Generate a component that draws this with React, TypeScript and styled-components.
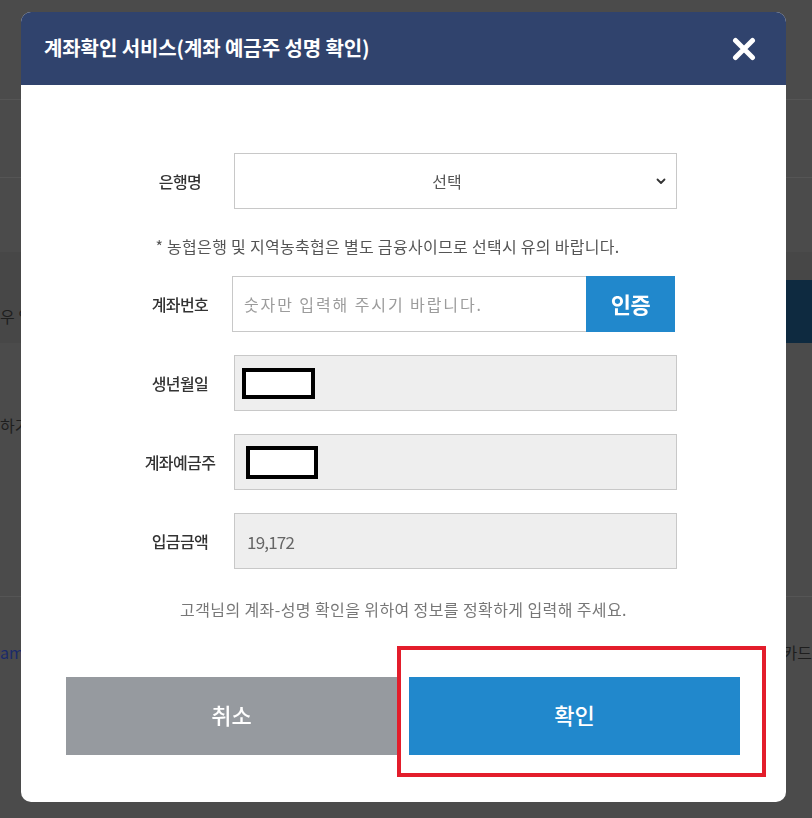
import React from "react";
import styled, { createGlobalStyle } from "styled-components";

const GlobalStyle = createGlobalStyle`
  html, body {
    margin: 0;
    padding: 0;
    background: #4b4b4b;
  }
  body {
    font-family: "Noto Sans CJK KR", "Noto Sans", sans-serif;
    width: 812px;
    height: 818px;
    overflow: hidden;
  }
  * { box-sizing: border-box; }
`;

/* ---------- dimmed background page ---------- */
const Page = styled.div`
  width: 812px;
  height: 818px;
  display: flex;
  flex-direction: column;
  background: #4b4b4b;
  color: #1c1c1c;
  font-size: 16px;
`;

const PageBand = styled.div<{ $h: number; $line?: boolean; $bg?: string; $align?: string }>`
  height: ${(p) => p.$h}px;
  flex: none;
  background: ${(p) => p.$bg || "transparent"};
  border-bottom: ${(p) => (p.$line ? "1px solid #555555" : "none")};
  display: flex;
  align-items: ${(p) => p.$align || "center"};
  justify-content: space-between;
`;

const PageText = styled.span<{ $color?: string; $shift?: number }>`
  color: ${(p) => p.$color || "#1e1e1e"};
  font-size: 16px;
  white-space: nowrap;
  line-height: 1;
  margin-top: ${(p) => p.$shift ?? 0}px;
`;

const NavyBlock = styled.div`
  width: 30px;
  height: 63px;
  align-self: flex-end;
  background: #0e2a40;
`;

/* ---------- modal ---------- */
const Overlay = styled.div`
  position: fixed;
  inset: 0;
  padding: 12px 26px 16px 21px;
  display: flex;
  align-items: flex-start;
`;

const Modal = styled.div`
  width: 765px;
  height: 790px;
  background: #ffffff;
  border-radius: 10px;
  display: flex;
  flex-direction: column;
`;

const Header = styled.div`
  height: 73px;
  flex: none;
  background: #30436d;
  border-radius: 10px 10px 0 0;
  display: flex;
  align-items: center;
  justify-content: space-between;
  padding: 0 29px 0 23px;
`;

const Title = styled.h1`
  margin: 0;
  color: #ffffff;
  font-size: 20px;
  font-weight: 700;
  letter-spacing: -0.1px;
  line-height: 1;
  padding-bottom: 2px;
`;

const CloseButton = styled.button`
  width: 26px;
  height: 26px;
  padding: 0;
  border: 0;
  background: transparent;
  display: flex;
  align-items: center;
  justify-content: center;
  cursor: pointer;
`;

const Body = styled.div`
  flex: 1;
  display: flex;
  flex-direction: column;
  padding: 68px 0 0;
`;

const Form = styled.div`
  width: 547px;
  margin: 0 auto;
  display: flex;
  flex-direction: column;
`;

const Row = styled.div<{ $gapAfter?: number }>`
  display: grid;
  grid-template-columns: 100px 443px;
  column-gap: 4px;
  align-items: center;
  margin-bottom: ${(p) => p.$gapAfter ?? 23}px;
`;

const Label = styled.label`
  text-align: center;
  color: #333333;
  font-size: 16px;
  font-weight: 500;
  letter-spacing: -0.6px;
`;

const SelectBox = styled.div`
  height: 56px;
  border: 1px solid #c8c8c8;
  background: #ffffff;
  display: flex;
  align-items: center;
  padding: 0 10px 0 0;
`;

const SelectText = styled.span`
  flex: 1;
  text-align: center;
  color: #555555;
  font-size: 16px;
  padding-left: 3px;
`;

const InputGroup = styled.div`
  display: flex;
  height: 56px;
  margin-left: -2px;
  margin-right: 2px;
`;

const TextInput = styled.input`
  flex: 1;
  min-width: 0;
  height: 56px;
  border: 1px solid #c8c8c8;
  border-right: 0;
  padding: 0 11px;
  font-family: "Noto Sans CJK KR", sans-serif;
  font-size: 16px;
  letter-spacing: 1.9px;
  color: #333;
  outline: none;
  &::placeholder {
    color: #9c9c9c;
  }
`;

const AuthButton = styled.button`
  width: 89px;
  height: 56px;
  border: 0;
  background: #2188cc;
  color: #ffffff;
  font-family: "Noto Sans CJK KR", sans-serif;
  font-size: 22px;
  font-weight: 700;
  letter-spacing: -0.5px;
  padding: 0 0 2px;
  cursor: pointer;
`;

const ReadonlyBox = styled.div<{ $pad?: number }>`
  height: 56px;
  border: 1px solid #c8c8c8;
  background: #eeeeee;
  display: flex;
  align-items: center;
  padding-left: ${(p) => p.$pad ?? 12}px;
  color: #666666;
  font-size: 17px;
  letter-spacing: -0.8px;
`;

const Redaction = styled.div<{ $w: number; $h: number }>`
  width: ${(p) => p.$w}px;
  height: ${(p) => p.$h}px;
  border: 4px solid #000000;
  background: #ffffff;
`;

const Note = styled.p<{
  $top: number;
  $bottom: number;
  $color: string;
  $spacing: number;
  $offset?: number;
}>`
  margin: 0;
  padding: ${(p) => p.$top}px 0 ${(p) => p.$bottom}px;
  line-height: 20px;
  font-size: 16px;
  color: ${(p) => p.$color};
  text-align: center;
  letter-spacing: ${(p) => p.$spacing}px;
  white-space: nowrap;
  transform: translateX(${(p) => p.$offset ?? 0}px);
`;

const ButtonRow = styled.div`
  display: flex;
  gap: 12px;
  padding: 0 46px 0 45px;
`;

const ActionButton = styled.button<{ $primary?: boolean }>`
  flex: 1;
  height: 78px;
  border: 0;
  background: ${(p) => (p.$primary ? "#2188cc" : "#969a9f")};
  color: #ffffff;
  font-family: "Noto Sans CJK KR", sans-serif;
  font-size: 22px;
  font-weight: 500;
  padding: 0 0 4px;
  cursor: pointer;
`;

const Highlight = styled.div`
  flex: 1;
  display: flex;
  position: relative;
`;

const HighlightFrame = styled.div`
  position: absolute;
  top: -31px;
  left: -12px;
  right: -26px;
  bottom: -22px;
  border: 4px solid #e31d2b;
  pointer-events: none;
`;

const Chevron = () => (
  <svg width="10" height="7" viewBox="0 0 10 7" fill="none">
    <polyline
      points="1.5,1.5 5,5 8.5,1.5"
      stroke="#333"
      strokeWidth="1.8"
      strokeLinecap="round"
      strokeLinejoin="round"
    />
  </svg>
);

const CloseIcon = () => (
  <svg width="24" height="24" viewBox="0 0 24 24" fill="none">
    <path
      d="M3.5 3.5 L20.5 20.5 M20.5 3.5 L3.5 20.5"
      stroke="#ffffff"
      strokeWidth="5"
      strokeLinecap="round"
    />
  </svg>
);

export default function App() {
  return (
    <>
      <GlobalStyle />
      <Page>
        <PageBand $h={100} $line />
        <PageBand $h={78} $line />
        <PageBand $h={74} />
        <PageBand $h={91} $bg="#474747">
          <PageText $shift={36}>우 입</PageText>
          <NavyBlock />
        </PageBand>
        <PageBand $h={254} $line $align="flex-start">
          <PageText $shift={74}>하기</PageText>
        </PageBand>
        <PageBand $h={110}>
          <PageText $color="#1a2a6a">ami</PageText>
          <PageText>카드</PageText>
        </PageBand>
      </Page>

      <Overlay>
        <Modal role="dialog" aria-label="계좌확인 서비스">
          <Header>
            <Title>계좌확인 서비스(계좌 예금주 성명 확인)</Title>
            <CloseButton aria-label="닫기">
              <CloseIcon />
            </CloseButton>
          </Header>
          <Body>
            <Form>
              <Row $gapAfter={0}>
                <Label>은행명</Label>
                <SelectBox>
                  <SelectText>선택</SelectText>
                  <Chevron />
                </SelectBox>
              </Row>
              <Note $top={27} $bottom={20} $color="#555555" $spacing={0.3} $offset={-16}>
                * 농협은행 및 지역농축협은 별도 금융사이므로 선택시 유의 바랍니다.
              </Note>
              <Row>
                <Label>계좌번호</Label>
                <InputGroup>
                  <TextInput placeholder="숫자만 입력해 주시기 바랍니다." />
                  <AuthButton>인증</AuthButton>
                </InputGroup>
              </Row>
              <Row>
                <Label>생년월일</Label>
                <ReadonlyBox $pad={7}>
                  <Redaction $w={73} $h={31} />
                </ReadonlyBox>
              </Row>
              <Row>
                <Label>계좌예금주</Label>
                <ReadonlyBox $pad={11}>
                  <Redaction $w={72} $h={33} />
                </ReadonlyBox>
              </Row>
              <Row $gapAfter={0}>
                <Label>입금금액</Label>
                <ReadonlyBox $pad={12}>19,172</ReadonlyBox>
              </Row>
            </Form>
            <Note $top={30} $bottom={58} $color="#777777" $spacing={0.4}>
              고객님의 계좌-성명 확인을 위하여 정보를 정확하게 입력해 주세요.
            </Note>
            <ButtonRow>
              <ActionButton>취소</ActionButton>
              <Highlight>
                <ActionButton $primary>확인</ActionButton>
                <HighlightFrame />
              </Highlight>
            </ButtonRow>
          </Body>
        </Modal>
      </Overlay>
    </>
  );
}
